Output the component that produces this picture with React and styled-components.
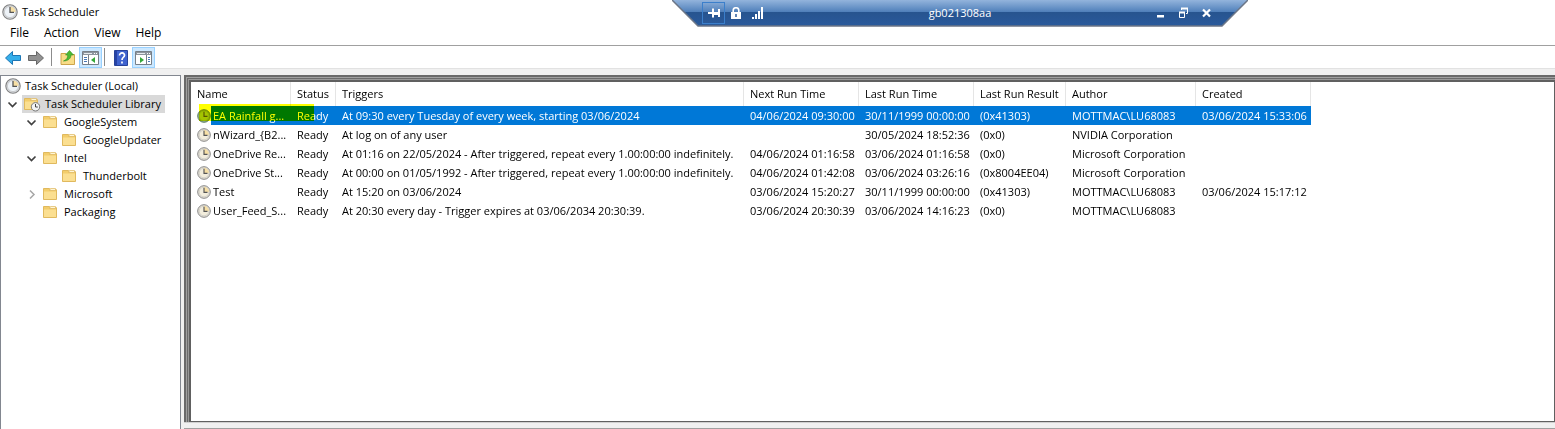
import React from "react";
import styled, { createGlobalStyle } from "styled-components";

const Global = createGlobalStyle`
  *, *::before, *::after { box-sizing: border-box; }
  body { margin: 0; background: #fff; overflow: hidden; }
  body, button, table { font-family: "Open Sans", "Noto Sans", sans-serif; font-size: 11px; line-height: 18px; color: #000; }
`;

const Window = styled.div`
  display: flex;
  flex-direction: column;
  height: 100vh;
  background: #f0f0f0;
`;

const TitleBar = styled.header`
  display: flex;
  align-items: center;
  gap: 4px;
  height: 24px;
  padding: 0 2px;
  background: #fff;
`;

const Title = styled.h1`
  margin: 0;
  font-size: 11px;
  font-weight: 400;
`;

const MenuBar = styled.nav`
  display: flex;
  align-items: flex-start;
  gap: 15px;
  height: 22px;
  padding: 0 10px;
  background: #fff;
  border-bottom: 1px solid #a0a0a0;
`;

const MenuItem = styled.button`
  padding: 0;
  border: 0;
  background: none;
  font-size: 12px;
`;

const ToolBar = styled.div`
  display: flex;
  align-items: flex-end;
  height: 23px;
  padding: 0 1px;
  background: #fff;
  border-bottom: 1px solid #e2e2e2;
`;

const ToolButton = styled.button`
  display: flex;
  align-items: center;
  justify-content: center;
  width: 23px;
  height: 21px;
  padding: 0;
  border: 1px solid ${(p) => (p.$active ? "#99d1ff" : "transparent")};
  background: ${(p) => (p.$active ? "#cce8ff" : "none")};
`;

const Divider = styled.span`
  width: 1px;
  height: 18px;
  margin: 0 4px 2px ${(p) => (p.$tight ? 2 : 4)}px;
  background: #8c8c8c;
`;

const Panes = styled.div`
  flex: 1;
  display: flex;
  gap: 3px;
  min-height: 0;
  padding-top: 6px;
`;

const TreePane = styled.aside`
  width: 181px;
  flex: none;
  background: #fff;
  border: solid #828790;
  border-width: 1px 1px 0 1px;
`;

const Tree = styled.ul`
  margin: 0;
  padding: 1px 0 0;
  list-style: none;
`;

const TreeItem = styled.li`
  display: flex;
  align-items: center;
  height: 18px;
  padding-left: ${(p) => p.$level * 19 + 3}px;
  white-space: nowrap;
`;

const Expander = styled.button`
  display: flex;
  width: 18px;
  flex: none;
  padding: 0;
  border: 0;
  background: none;
`;

const TreeLabel = styled.span`
  display: flex;
  align-items: center;
  gap: 4px;
  height: 18px;
  padding: 0 4px 0 1px;
  background: ${(p) => (p.$selected ? "#d9d9d9" : "none")};
`;

const MainPane = styled.main`
  flex: 1;
  min-width: 0;
  display: flex;
  flex-direction: column;
`;

const FrameOuter = styled.div`
  flex: 1;
  display: flex;
  padding: 1px 0 0 1px;
  border: solid #696969;
  border-width: 2px 0 0 2px;
  background: #a0a0a0;
`;

const FrameInner = styled.div`
  flex: 1;
  display: flex;
  padding: 1px 0 0 1px;
  border: solid #6b6b6b;
  border-width: 1px 0 0 1px;
  background: #989898;
`;

const ListArea = styled.section`
  flex: 1;
  background: #fff;
  border: solid #606060;
  border-width: 2px 1px 1px 2px;
`;

const StatusStrip = styled.footer`
  height: 7px;
  border-top: 1px solid #d0d0d0;
  border-bottom: 1px solid #a0a0a0;
  background: #f0f0f0;
`;

const TaskTable = styled.table`
  position: relative;
  table-layout: fixed;
  width: 1120px;
  border-collapse: separate;
  border-spacing: 0;
  isolation: isolate;
`;

const HeadCell = styled.th`
  height: 24px;
  padding: 0 0 0 6px;
  border-right: 1px solid #e5e5e5;
  font-weight: 400;
  text-align: left;
  white-space: nowrap;
`;

const TaskRow = styled.tr`
  color: ${(p) => (p.$selected ? "#fff" : "#000")};
  background: ${(p) => (p.$selected ? "linear-gradient(90deg, #fff 20px, #0078d7 20px)" : "none")};
`;

const TaskCell = styled.td`
  height: 19px;
  padding: 0 0 0 6px;
  white-space: nowrap;
`;

const NameCell = styled.div`
  display: flex;
  align-items: center;
  gap: 2px;
`;

const Highlight = styled.span`
  position: absolute;
  z-index: 1;
  left: 8px;
  top: 22px;
  width: 115px;
  height: 17px;
  background: #ff0;
  mix-blend-mode: multiply;
`;

const RemoteBar = styled.div`
  position: absolute;
  top: 0;
  left: 672px;
  width: 576px;
  height: 27px;
`;

const BarShape = styled.svg`
  display: block;
  width: 100%;
  height: 27px;
`;

const BarContent = styled.div`
  position: absolute;
  inset: 0;
  display: grid;
  grid-template-columns: 1fr auto 1fr;
  align-items: center;
  padding: 0 30px 2px;
  color: #fff;
`;

const BarGroup = styled.div`
  display: flex;
  justify-content: ${(p) => (p.$end ? "flex-end" : "flex-start")};
`;

const BarButton = styled.button`
  display: flex;
  align-items: center;
  justify-content: center;
  width: ${(p) => (p.$narrow ? 21 : 23)}px;
  height: 22px;
  padding: 0;
  border: 1px solid ${(p) => (p.$active ? "#3b7fcb" : "transparent")};
  background: none;
`;

const Clock = ({ size = 16, small, selected }) => (
  <svg width={size} height={size} viewBox="0 0 16 16">
    <circle cx="8" cy="8" r="7.2" fill={selected ? "#8fae9a" : small ? "#eeeade" : "#d9dde2"} stroke={selected ? "#5c7a60" : "#808080"} strokeWidth="1.1" />
    <circle cx="8" cy="8" r="5.6" fill={selected ? "#a4c4b0" : small ? "#f2eddc" : "#eef3f8"} stroke={selected ? "#86a890" : "#b5b5b5"} strokeWidth=".6" />
    {!selected && <path d="M8 8V2.4A5.6 5.6 0 0 1 13.6 8z" fill="#f6dfa5" />}
    <path d="M8 3v5.4h4" fill="none" stroke="#555" strokeWidth="1.3" />
  </svg>
);

const Folder = ({ clock }) => (
  <svg width="18" height="16" viewBox="0 0 18 16">
    <path d="M1.5 13.5v-11h6l1 1.2h6v9.8z" fill="#f3cd6b" stroke="#e0b95e" />
    <path d="M7.5 4.5l1-2h5v2z" fill="#fff6d6" stroke="#dcb45c" strokeWidth=".7" />
    <path d="M2 5.5h12V13H2z" fill="#fbdf91" />
    {clock && (
      <g>
        <circle cx="12.5" cy="10.8" r="4.2" fill="#f3f4f5" stroke="#777" />
        <path d="M12.5 8v3h2.3" fill="none" stroke="#444" />
      </g>
    )}
  </svg>
);

const Chevron = ({ open }) => (
  <svg width="16" height="16" viewBox="0 0 16 16" fill="none">
    {open ? <path d="M4.5 6.5l4 4 4-4" stroke="#404040" strokeWidth="1.7" /> : <path d="M7 4.5l4 4-4 4" stroke="#a6a6a6" strokeWidth="1.5" />}
  </svg>
);

const Arrow = ({ forward }) => (
  <svg width="18" height="16" viewBox="0 0 18 16">
    <path
      d={forward ? "M1.5 5.5h8v-4l7 6.5-7 6.5v-4h-8z" : "M16.5 5.5h-8v-4L1.5 8l7 6.5v-4h8z"}
      fill={forward ? "#929292" : "#35aeea"}
      stroke={forward ? "#666" : "#1d76b5"}
    />
  </svg>
);

const UpFolder = () => (
  <svg width="16" height="16" viewBox="0 0 16 16">
    <path d="M1 14.5v-11h5l1 1h7.5v10z" fill="#f8dc87" stroke="#cda44b" />
    <path d="M3.5 11c3-1 4.5-3.5 4.2-6H5.5l4-4.5 4 4.5H11c0 3.500-3 6-7.500 6z" fill="#4dba35" stroke="#2f8d20" strokeWidth=".6" />
  </svg>
);

const PaneIcon = ({ right }) => (
  <svg width="17" height="16" viewBox="0 0 17 16">
    <path d="M.5 1.5h16v13H.5z" fill="#fff" stroke="#777f88" />
    <path d="M1 2h15v3H1z" fill="#8d959e" />
    <path d="M2 3.5h8" stroke="#e5e9ed" />
    <path d="M12 3.5h1M14 3.5h1" stroke="#fff" />
    <path d={right ? "M11.5 5v9.5" : "M6.5 5v9.5"} stroke="#777f88" />
    <path d={right ? "M13 7.5h2M13 9.5h2M13 11.5h2" : "M2 7.5h3M2 9.5h3M2 11.5h3"} stroke="#4a78b5" />
    <path d={right ? "M5 7l4 3-4 3z" : "M13 7l-4 3 4 3z"} fill="#35a838" />
  </svg>
);

const HelpBook = () => (
  <svg width="14" height="16" viewBox="0 0 14 16">
    <path d="M.5.5h13v15H.5z" fill="#3f63cf" stroke="#27429a" />
    <path d="M1 1h2v14H1z" fill="#2743a5" />
    <path d="M5.5 5.5C5.5 2 10.8 2.2 10.5 5.5 10.3 7.3 8 7.4 8 10M8 11.5v2" fill="none" stroke="#fff" strokeWidth="1.7" />
  </svg>
);

const Pin = () => (
  <svg width="14" height="12" viewBox="0 0 14 12" stroke="#fff" fill="none">
    <path d="M1 6h4.5" strokeWidth="2" />
    <path d="M6 1.5v9M12 2v8" strokeWidth="2" />
    <path d="M6 6.5h6" strokeWidth="3" />
  </svg>
);

const Lock = () => (
  <svg width="10" height="12" viewBox="0 0 10 12">
    <path d="M2.2 5.5v-2a2.8 2.8 0 0 1 5.6 0v2" fill="none" stroke="#fff" strokeWidth="1.6" />
    <path d="M0 5h10v7H0z" fill="#fff" />
    <path d="M5 7v3" stroke="#2c5d9d" strokeWidth="1.5" />
  </svg>
);

const Signal = () => (
  <svg width="12" height="12" viewBox="0 0 12 12" fill="#fff">
    <path d="M0 10h2v2H0zM3 7h2v5H3zM6 4h2v8H6zM9 0h2v12H9z" />
  </svg>
);

const Minimise = () => (
  <svg width="12" height="12" viewBox="0 0 12 12"><path d="M2 8h7v2.500H2z" fill="#fff" /></svg>
);

const Restore = () => (
  <svg width="12" height="12" viewBox="0 0 12 12" fill="none" stroke="#fff">
    <path d="M3.5 3V1.500h6v5H8" />
    <path d="M3 1.500h7M1 5.500h6" strokeWidth="2" />
    <path d="M1.500 5v5.500h5V5" />
  </svg>
);

const Close = () => (
  <svg width="12" height="12" viewBox="0 0 12 12"><path d="M2 2.500l7 7M9 2.500l-7 7" stroke="#fff" strokeWidth="2.200" /></svg>
);

const treeItems = [
  { level: 0, label: "Task Scheduler Library", open: true, selected: true },
  { level: 1, label: "GoogleSystem", open: true },
  { level: 2, label: "GoogleUpdater" },
  { level: 1, label: "Intel", open: true },
  { level: 2, label: "Thunderbolt" },
  { level: 1, label: "Microsoft", open: false },
  { level: 1, label: "Packaging" },
];

const columns = [
  ["Name", 100], ["Status", 45], ["Triggers", 408], ["Next Run Time", 115],
  ["Last Run Time", 115], ["Last Run Result", 92], ["Author", 130], ["Created", 115],
];

const tasks = [
  ["EA Rainfall g...", "Ready", "At 09:30 every Tuesday of every week, starting 03/06/2024", "04/06/2024 09:30:00", "30/11/1999 00:00:00", "(0x41303)", "MOTTMAC\\LU68083", "03/06/2024 15:33:06"],
  ["nWizard_{B2...", "Ready", "At log on of any user", "", "30/05/2024 18:52:36", "(0x0)", "NVIDIA Corporation", ""],
  ["OneDrive Re...", "Ready", "At 01:16 on 22/05/2024 - After triggered, repeat every 1.00:00:00 indefinitely.", "04/06/2024 01:16:58", "03/06/2024 01:16:58", "(0x0)", "Microsoft Corporation", ""],
  ["OneDrive St...", "Ready", "At 00:00 on 01/05/1992 - After triggered, repeat every 1.00:00:00 indefinitely.", "04/06/2024 01:42:08", "03/06/2024 03:26:16", "(0x8004EE04)", "Microsoft Corporation", ""],
  ["Test", "Ready", "At 15:20 on 03/06/2024", "03/06/2024 15:20:27", "30/11/1999 00:00:00", "(0x41303)", "MOTTMAC\\LU68083", "03/06/2024 15:17:12"],
  ["User_Feed_S...", "Ready", "At 20:30 every day - Trigger expires at 03/06/2034 20:30:39.", "03/06/2024 20:30:39", "03/06/2024 14:16:23", "(0x0)", "MOTTMAC\\LU68083", ""],
];

export default function App() {
  return (
    <Window>
      <Global />
      <TitleBar>
        <Clock />
        <Title>Task Scheduler</Title>
      </TitleBar>
      <MenuBar>
        {["File", "Action", "View", "Help"].map((m) => <MenuItem key={m}>{m}</MenuItem>)}
      </MenuBar>
      <ToolBar>
        <ToolButton aria-label="Back"><Arrow /></ToolButton>
        <ToolButton aria-label="Forward"><Arrow forward /></ToolButton>
        <Divider />
        <ToolButton aria-label="Up one level"><UpFolder /></ToolButton>
        <ToolButton $active aria-label="Show console tree"><PaneIcon /></ToolButton>
        <Divider $tight />
        <ToolButton aria-label="Help contents"><HelpBook /></ToolButton>
        <ToolButton $active aria-label="Show action pane"><PaneIcon right /></ToolButton>
      </ToolBar>
      <Panes>
        <TreePane>
          <Tree>
            <TreeItem $level={0}>
              <TreeLabel><Clock />Task Scheduler (Local)</TreeLabel>
            </TreeItem>
            {treeItems.map((t) => (
              <TreeItem key={t.label} $level={t.level}>
                <Expander aria-label={"Toggle " + t.label}>{t.open !== undefined && <Chevron open={t.open} />}</Expander>
                <TreeLabel $selected={t.selected}><Folder clock={t.selected} />{t.label}</TreeLabel>
              </TreeItem>
            ))}
          </Tree>
        </TreePane>
        <MainPane>
          <FrameOuter>
            <FrameInner>
              <ListArea>
                <TaskTable>
                  <colgroup>{columns.map(([c, w]) => <col key={c} width={w} />)}</colgroup>
                  <thead><tr>{columns.map(([c]) => <HeadCell key={c}>{c}</HeadCell>)}</tr></thead>
                  <tbody>
                    {tasks.map((t, r) => (
                      <TaskRow key={t[0]} $selected={r === 0}>
                        {t.map((v, i) => (
                          <TaskCell key={i}>
                            {i === 0 ? <NameCell><Clock size={14} small selected={r === 0} />{v}{r === 0 && <Highlight />}</NameCell> : v}
                          </TaskCell>
                        ))}
                      </TaskRow>
                    ))}
                  </tbody>
                </TaskTable>
              </ListArea>
            </FrameInner>
          </FrameOuter>
          <StatusStrip />
        </MainPane>
      </Panes>
      <RemoteBar>
        <BarShape viewBox="0 0 576 27" preserveAspectRatio="none">
          <defs>
            <linearGradient id="bar" x1="0" y1="0" x2="0" y2="1">
              <stop offset="0" stopColor="#93b4dc" />
              <stop offset=".46" stopColor="#4f7fba" />
              <stop offset=".47" stopColor="#27548f" />
              <stop offset="1" stopColor="#2a5a9c" />
            </linearGradient>
          </defs>
          <path d="M0 0h576l-26 26H26z" fill="url(#bar)" />
          <path d="M0 0l26 26h524l26-26" fill="none" stroke="#6c7687" strokeWidth="1.5" />
        </BarShape>
        <BarContent>
          <BarGroup>
            <BarButton $active aria-label="Pin"><Pin /></BarButton>
            <BarButton $narrow aria-label="Security"><Lock /></BarButton>
            <BarButton aria-label="Connection quality"><Signal /></BarButton>
          </BarGroup>
          <span>gb021308aa</span>
          <BarGroup $end>
            <BarButton aria-label="Minimise"><Minimise /></BarButton>
            <BarButton aria-label="Restore"><Restore /></BarButton>
            <BarButton aria-label="Close"><Close /></BarButton>
          </BarGroup>
        </BarContent>
      </RemoteBar>
    </Window>
  );
}
